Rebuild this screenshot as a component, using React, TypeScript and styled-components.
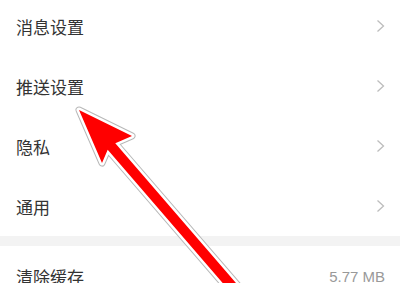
import React from 'react';
import styled, { createGlobalStyle } from 'styled-components';

const GlobalStyle = createGlobalStyle`
  html, body {
    margin: 0;
    padding: 0;
    background: #fff;
  }
  body {
    width: 400px;
    height: 283px;
    overflow: hidden;
    font-family: "Noto Sans CJK SC", "Noto Sans", sans-serif;
  }
`;

const Page = styled.div`
  position: relative;
  width: 400px;
  height: 283px;
  overflow: hidden;
  background: #fff;
`;

const List = styled.div`
  margin-top: -4px;
  display: flex;
  flex-direction: column;
`;

const Row = styled.div`
  height: 60px;
  display: flex;
  align-items: center;
  justify-content: space-between;
  padding: 0 15px 0 16px;
  background: #fff;
`;

const Label = styled.span`
  font-size: 17px;
  color: #333;
  letter-spacing: 0;
`;

const Value = styled.span`
  font-family: "Liberation Sans", Arial, sans-serif;
  font-size: 15px;
  color: #999;
`;

const Gap = styled.div`
  height: 10px;
  background: #f3f3f3;
`;

const Overlay = styled.svg`
  position: absolute;
  left: 0;
  top: 0;
  width: 400px;
  height: 283px;
  pointer-events: none;
`;

const Chevron = () => (
  <svg width="9" height="14" viewBox="0 0 9 14">
    <path d="M1.5 1.5 L7.5 7 L1.5 12.5" fill="none" stroke="#bdbdbd" strokeWidth="1.3" />
  </svg>
);

const items = ['消息设置', '推送设置', '隐私', '通用'];

const arrow = '79,110 132,136 115.3,143.2 247.8,296.7 240.2,303.3 107.7,149.8 102,163';

export default function App() {
  return (
    <Page>
      <GlobalStyle />
      <List>
        {items.map(name => (
          <Row key={name}>
            <Label>{name}</Label>
            <Chevron />
          </Row>
        ))}
        <Gap />
        <Row>
          <Label>清除缓存</Label>
          <Value>5.77 MB</Value>
        </Row>
      </List>
      <Overlay viewBox="0 0 400 283">
        <polygon points={arrow} fill="none" stroke="#b8b8b8" strokeWidth="7" strokeLinejoin="round" />
        <polygon points={arrow} fill="none" stroke="#fff" strokeWidth="5" strokeLinejoin="round" />
        <polygon points={arrow} fill="#ff0000" />
      </Overlay>
    </Page>
  );
}
